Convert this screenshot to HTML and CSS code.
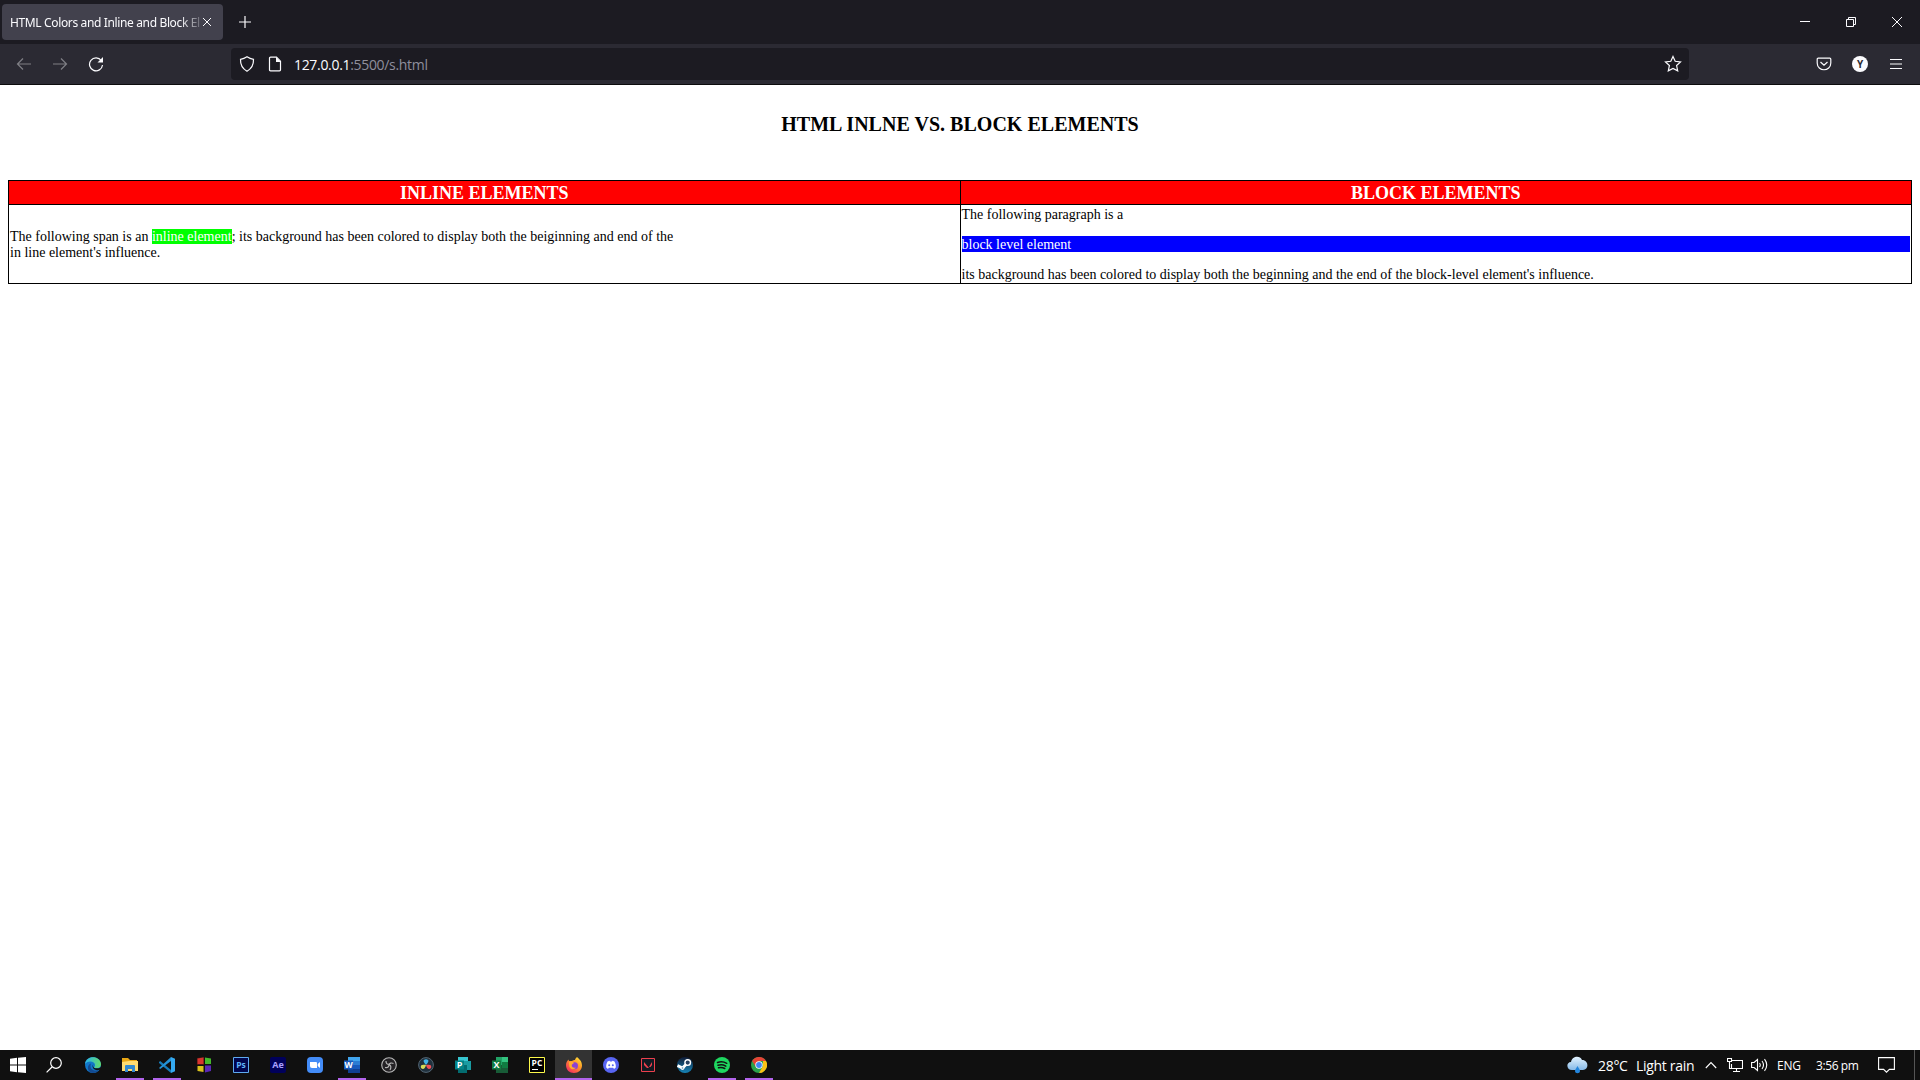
FILE: index.html
```html
<!DOCTYPE html>
<html lang="en">
<head>
<meta charset="utf-8">
<title>HTML Colors and Inline and Block Elements</title>
<link rel="stylesheet" href="styles.css">
</head>
<body>
<header class="tabs">
  <div class="tab"><span class="tab-title">HTML Colors and Inline and Block El</span>
    <svg class="tab-close" width="10" height="10" viewBox="0 0 10 10"><path d="M1 1l8 8M9 1L1 9"/></svg></div>
  <svg class="new-tab" width="14" height="14" viewBox="0 0 14 14"><path d="M7 1v12M1 7h12"/></svg>
  <div class="window-buttons">
    <svg width="12" height="12" viewBox="0 0 12 12"><path d="M1 5.500h10"/></svg>
    <svg width="12" height="12" viewBox="0 0 12 12"><path d="M1.500 3.500h7v7h-7zM3.500 3V1.500h7v7H9"/></svg>
    <svg width="12" height="12" viewBox="0 0 12 12"><path d="M1 1l10 10M11 1L1 11"/></svg>
  </div>
</header>
<nav class="toolbar">
  <div class="nav-buttons">
    <svg class="dim" width="16" height="16" viewBox="0 0 16 16"><path d="M15 8H1.500M7 2.500L1.500 8 7 13.500"/></svg>
    <svg class="dim" width="16" height="16" viewBox="0 0 16 16"><path d="M1 8h13.500M9 2.500L14.500 8 9 13.500"/></svg>
    <svg width="16" height="16" viewBox="0 0 16 16"><path d="M13.300 4.500A6.500 6.500 0 1 0 14.500 9" /><path class="solid" d="M15 1v5.500H9.500z"/></svg>
  </div>
  <div class="address">
    <svg width="16" height="16" viewBox="0 0 16 16"><path d="M8 .8C6 2.200 4 3 1.500 3.300 1.300 8.500 3 12.500 8 15.200c5-2.700 6.700-6.700 6.500-11.900C12 3 10 2.200 8 .8z"/></svg>
    <svg width="16" height="16" viewBox="0 0 16 16"><path d="M3.500 1.200h6l4 4v8.600q0 1-1 1h-9q-1 0-1-1V2.200q0-1 1-1z"/><path class="solid" d="M9 1l5 5H9z"/></svg>
    <span class="url"><b>127.0.0.1</b>:5500/s.html</span>
    <svg class="star" width="18" height="18" viewBox="0 0 18 18"><path d="M9 1.500l2.200 4.800 5.300.6-3.900 3.600 1.100 5.400L9 13.400l-4.700 2.500 1.100-5.400L1.500 6.900l5.300-.6z"/></svg>
  </div>
  <div class="tools">
    <svg width="16" height="16" viewBox="0 0 16 16"><path d="M2.200 2.200h11.600q1 0 1 1V7c0 9-13.600 9-13.600 0V3.200q0-1 1-1zM4.500 6L8 9.300 11.500 6"/></svg>
    <span class="avatar">Y</span>
    <svg width="16" height="16" viewBox="0 0 16 16"><path d="M2 3.500h12M2 8h12M2 12.500h12"/></svg>
  </div>
</nav>
<main class="page">
  <h2>HTML INLNE VS. BLOCK ELEMENTS</h2>
  <table>
    <tr><th>INLINE ELEMENTS</th><th>BLOCK ELEMENTS</th></tr>
    <tr>
      <td>The following span is an <span class="inline-demo">inline element</span>; its background has been colored to display both the beiginning and end of the<br>in line element's influence.</td>
      <td>The following paragraph is a<p class="block-demo">block level element</p>its background has been colored to display both the beginning and the end of the block-level element's influence.</td>
    </tr>
  </table>
</main>
<footer class="taskbar">
  <div class="slot start"><svg viewBox="0 0 16 16"><path fill="#fff" d="M0 1.700L7 .8v6.700H0zM8 .7L16 0v7.500H8zM0 8.500h7v6.700l-7-.9zM8 8.500h8V16l-8-.8z"/></svg></div>
  <div class="slot search"><svg viewBox="0 0 16 16"><path fill="none" stroke="#fff" stroke-width="1.200" d="M6 10L.6 15.400"/><circle cx="10" cy="6" r="5.300" fill="none" stroke="#fff" stroke-width="1.200"/></svg></div>
  <div class="slot"><svg viewBox="0 0 16 16"><defs><linearGradient id="edge"><stop stop-color="#2bb5ed"/><stop offset="1" stop-color="#62db69"/></linearGradient></defs><circle cx="8" cy="8" r="8" fill="#1277c9"/><path fill="url(#edge)" d="M0 7C1-2 15-2 16 7c0 4-4 5-6.500 4-1-1 .5-1 .5-3C10 4 3 3 0 7z"/><path fill="#134a91" d="M6 6.500c-2 5 2 8.500 8 6.500-3 4-10 4-11-1-.5-3 1-5 3-5.500z"/><path fill="#111" d="M8.500 7c-1.500 2 0 5.500 6 4l1.500-1v2l-2 1c-5 1-8-3-5.500-6z"/></svg></div>
  <div class="slot open"><svg viewBox="0 0 16 16"><path fill="#e9a714" d="M0 1h6l2 2h7v3H0z"/><path fill="#ffdc71" d="M0 5l7-1h9v10H0z"/><path fill="#3289d0" d="M3 9q0-1 1-1h8q1 0 1 1v6h-3v-3H6v3H3z"/></svg></div>
  <div class="slot open"><svg viewBox="0 0 16 16"><path fill="#167bb9" d="M0 5l1.200-1L12 13v3L0 6z"/><path fill="#2492d6" d="M0 11L12 0v4L1.200 12z"/><path fill="#35aaf1" d="M12 0l4 1.800v12.400L12 16z"/></svg></div>
  <div class="slot"><svg viewBox="0 0 16 16"><path fill="#4a1512" d="M1 1l7-1v8H1z"/><path fill="#d8352f" d="M1.500 1.500L7.500.5V7h-6z"/><path fill="#45b82b" d="M9 .5l6 1V7H9z"/><path fill="#d9c21c" d="M1.500 9h6v6l-6-1z"/><path fill="#5b28b8" d="M9 8.500h6V14l-6 1.500z"/></svg></div>
  <div class="slot"><svg viewBox="0 0 16 16"><path fill="#00064d" stroke="#5eaaf0" d="M.5.5h15v15H.5z"/><text x="8" y="11" font-size="8.500" fill="#5eb5fa">Ps</text></svg></div>
  <div class="slot"><svg viewBox="0 0 16 16"><rect width="16" height="16" rx="2" fill="#00005b"/><text x="8" y="11" font-size="9" fill="#aaa0ff">Ae</text></svg></div>
  <div class="slot"><svg viewBox="0 0 16 16"><rect width="16" height="16" rx="4" fill="#438cf7"/><path fill="#fff" d="M3 5h6q1 0 1 1v5H5q-2 0-2-2zM10.700 7L13 5v6l-2.300-2z"/></svg></div>
  <div class="slot open"><svg viewBox="0 0 16 16"><path fill="#41a5ee" d="M4 0h12v5H4z"/><path fill="#2b7cd3" d="M4 4h12v4H4z"/><path fill="#185abd" d="M4 8h12v4H4z"/><path fill="#103f91" d="M4 12h12v4H4z"/><path fill="#185abd" d="M0 3.500h9v9H0z"/><text x="4.500" y="11" font-size="8.500" fill="#fff">W</text></svg></div>
  <div class="slot"><svg viewBox="0 0 16 16"><circle cx="8" cy="8" r="7.300" fill="#252326" stroke="#b9b9b9" stroke-width="1.100"/><path fill="none" stroke="#b5b5b5" stroke-width="1.200" d="M5 4c0 3 1 3.500 3 3.500M12.500 6.500c-2-1-4-.5-4.500 1.500M4 10.500c3 .5 4-1 4-3 2 1 2.500 3 1 5.500"/></svg></div>
  <div class="slot"><svg viewBox="0 0 16 16"><circle cx="8" cy="8" r="7.400" fill="#20313e" stroke="#536573"/><path fill="#43b5e8" d="M8 8Q4.500 4 6 3c1-1 3-1 4 0q1.500 1-2 5z"/><path fill="#d5db57" d="M8 8c-1 4-3 5-5 3-1-3 1-4 5-3z"/><path fill="#f15156" d="M8 8c4-1 6 0 5 3-2 2-4 1-5-3z"/></svg></div>
  <div class="slot"><svg viewBox="0 0 16 16"><path fill="#37c6d0" d="M3 0h10v8H3z"/><path fill="#1a9ba1" d="M6 4h10v9H6z"/><path fill="#036c70" d="M3 8h9v8H3z"/><path fill="#038387" d="M0 3.500h9v9H0z"/><text x="4.700" y="11" font-size="9" fill="#fff">P</text></svg></div>
  <div class="slot"><svg viewBox="0 0 16 16"><path fill="#21a366" d="M4 0h6v8H4z"/><path fill="#33c481" d="M10 0h6v5h-6z"/><path fill="#107c41" d="M10 5h6v6h-6z"/><path fill="#185c37" d="M4 8h6v3h6v5H4z"/><path fill="#107c41" d="M0 3.500h9v9H0z"/><text x="4.500" y="11" font-size="9" fill="#fff">X</text></svg></div>
  <div class="slot"><svg viewBox="0 0 16 16"><path fill="#000" stroke="#fcf84a" d="M.5.5h15v15H.5z"/><text x="8" y="9" font-size="8.500" fill="#fff">PC</text><path stroke="#fff" d="M3 12.500h6"/></svg></div>
  <div class="slot active"><svg viewBox="0 0 16 16"><defs><linearGradient id="fire" x1="1" y1="0" x2=".2" y2="1"><stop stop-color="#fff33c"/><stop offset=".45" stop-color="#ff9627"/><stop offset="1" stop-color="#f52864"/></linearGradient></defs><path fill="url(#fire)" d="M11 0c2 2 5 4 5 8.500C16 13 12.500 16 8 16S0 13 0 8c0-2 1-4 2.500-5.500L3 4h3c1-1 2-1 3-1 0-1 1-2 2-3z"/><circle cx="8.500" cy="8.700" r="3.500" fill="#8b42d4"/><path fill="#ffad2c" d="M3 5c3-1 4 0 5 1L6 7.500c-1 2 1 4 4 3-2 3-7 2-7-3z"/></svg></div>
  <div class="slot"><svg viewBox="0 0 16 16"><circle cx="8" cy="8" r="8" fill="#5865f2"/><path fill="#fff" d="M4.500 4.500l2-.7.5.8h2l.5-.8 2 .7c1 2 1.500 3.500 1.300 6L11 12l-.8-1.200H5.800L5 12l-1.800-1.500c-.2-2.500.3-4 1.300-6z"/><circle cx="6.200" cy="8.300" r="1" fill="#5865f2"/><circle cx="9.800" cy="8.300" r="1" fill="#5865f2"/></svg></div>
  <div class="slot"><svg class="valorant" viewBox="0 0 14 14"><path fill="#111a22" stroke="#ed404d" d="M.5.5h13v13H.5z"/><path fill="#ed404d" d="M3 4l5 6H6L3 7zM11 4v3L9.500 9H8z"/></svg></div>
  <div class="slot"><svg viewBox="0 0 16 16"><defs><linearGradient id="steam" x2="0" y2="1"><stop stop-color="#101b35"/><stop offset="1" stop-color="#1685b8"/></linearGradient></defs><circle cx="8" cy="8" r="8" fill="url(#steam)"/><path fill="none" stroke="#fff" stroke-width="3" d="M.5 8.500l5 2.500 5-5"/><circle cx="10.700" cy="5.600" r="2.800" fill="#25405f" stroke="#fff" stroke-width="1.400"/><circle cx="5.500" cy="11" r="1.500" fill="#8eb2ca" stroke="#fff"/></svg></div>
  <div class="slot open"><svg viewBox="0 0 16 16"><circle cx="8" cy="8" r="8" fill="#1ed760"/><path fill="none" stroke="#111" stroke-linecap="round" stroke-width="1.500" d="M3.500 5.500c3-1 6.500-.7 9.200.8M4 8.300c2.500-.8 5.500-.5 7.800.8M4.500 10.800c2-.6 4.300-.4 6.300.7"/></svg></div>
  <div class="slot open"><svg viewBox="0 0 16 16"><circle cx="8" cy="8" r="8" fill="#2ba24c"/><path fill="#e64235" d="M1.100 4A8 8 0 0 1 15 4H8L5 10z"/><path fill="#fbc116" d="M15 4a8 8 0 0 1-7 12l4-7V4z"/><circle cx="8" cy="8" r="3.700" fill="#fff"/><circle cx="8" cy="8" r="2.900" fill="#4285f4"/></svg></div>
  <div class="tray">
    <svg class="weather" width="21" height="18" viewBox="0 0 21 18"><defs><linearGradient id="cloud" x2="0" y2="1"><stop stop-color="#e3f3ff"/><stop offset="1" stop-color="#86b9e7"/></linearGradient></defs><path fill="url(#cloud)" d="M5 14C-1 14-1 6 4 6 5 0 13-1 15 4c7 0 7 10 1 10z"/><path fill="#2385dc" d="M10.500 10c-1.500 2.500-2.500 3.500-2.500 5 0 3 5 3 5 0 0-1.500-1-2.500-2.500-5z"/></svg>
    <span class="temp">28°C</span><span class="condition">Light rain</span>
    <svg class="chevron" width="12" height="8" viewBox="0 0 12 8"><path d="M.8 7L6 1.500 11.200 7"/></svg>
    <svg class="network" width="16" height="14" viewBox="0 0 16 14"><path d="M5 2.500h10.500v8H4.500V6M9.500 10.500v3M6 13.500h7M.5.5h4v3h-4zM2.500 3.500v7h2"/></svg>
    <svg class="volume" width="17" height="14" viewBox="0 0 17 14"><path d="M.6 4.500h2.500L6.500 1.500v11L3.100 9.500H.6zM8.500 5q1.500 2 0 4M11 3q3 4 0 8M13.500 1.200q4.500 5.800 0 11.600"/></svg>
    <span class="lang">ENG</span><span class="time">3:56 pm</span>
    <svg class="notice" width="17" height="16" viewBox="0 0 17 16"><path d="M.6.6h15.800v11.800h-5l-2.900 2.800-2.900-2.800h-5z"/></svg>
  </div>
</footer>
</body>
</html>
```
FILE: styles.css
```css
* { box-sizing: border-box; }
body { margin: 0; height: 1080px; display: flex; flex-direction: column; overflow: hidden; background: #fff; font-family: "Open Sans", "Noto Sans", sans-serif; }
svg { display: block; flex: none; }
.tabs { height: 44px; flex: none; display: flex; align-items: center; background: #1c1b22; padding-left: 2px; }
.tabs svg, .toolbar svg { fill: none; stroke: #fbfbfe; stroke-width: 1.2; }
.tab { width: 221px; height: 36px; border-radius: 4px; background: #42414d; display: flex; align-items: center; padding: 0 11px 0 8px; color: #fbfbfe; font: 12px "Noto Sans", sans-serif; }
.tab-title { width: 191px; flex: none; white-space: nowrap; letter-spacing: -.36px; padding-top: 1px; mask-image: linear-gradient(90deg, #000 170px, transparent 196px); }
.tab .tab-close { margin-left: 1px; stroke-width: 1; }
.new-tab { margin-left: 15px; }
.window-buttons { margin-left: auto; display: flex; gap: 34px; padding-right: 17px; }
.window-buttons svg { stroke-width: 1; }
.toolbar { height: 41px; flex: none; display: flex; align-items: center; background: #2b2a33; border-bottom: 1px solid #0c0c0d; }
.nav-buttons { width: 231px; display: flex; gap: 20px; padding-left: 16px; }
.toolbar .dim { opacity: .4; }
.toolbar .solid { fill: #fbfbfe; stroke: none; }
.address { width: 1458px; height: 32px; border-radius: 4px; background: #1c1b22; display: flex; align-items: center; padding: 0 7px 0 8px; gap: 12px; }
.url { font-size: 14px; color: #8f8f9d; line-height: 20px; padding-top: 2px; letter-spacing: -.32px; margin-left: -1px; }
.url b { color: #fbfbfe; font-weight: 400; }
.star { margin-left: auto; }
.tools { margin-left: auto; display: flex; align-items: center; gap: 20px; padding-right: 16px; }
.avatar { width: 16px; height: 16px; border-radius: 50%; background: #fbfbfe; color: #2b2a33; font: bold 10px/16px "Open Sans", sans-serif; text-align: center; }
.page { flex: 1; padding: 0 8px; font-family: "Liberation Serif", serif; font-size: 14px; line-height: 16px; color: #000; }
.page h2 { margin: 28px 0 44px; font-size: 20px; line-height: 23px; text-align: center; letter-spacing: .02px; }
.page table { width: 1904px; table-layout: fixed; border-collapse: collapse; }
.page th, .page td { border: 1px solid #000; padding: 2px 1px 0; }
.page th { background: red; color: #fff; font-size: 18px; line-height: 21px; height: 24px; }
.page td { height: 79px; text-align: left; vertical-align: middle; }
.inline-demo { background: lime; color: #fff; }
.block-demo { margin: 13px 0 15px; padding-top: 2px; line-height: 14px; background: blue; color: #fff; }
.taskbar { height: 30px; flex: none; display: flex; background: #101010; color: #fff; }
.slot { width: 37px; display: flex; justify-content: center; align-items: center; }
.slot svg { width: 16px; height: 16px; }
.slot text { font-family: "Open Sans", sans-serif; font-weight: 700; text-anchor: middle; }
.slot .valorant { width: 14px; height: 14px; }
.start { width: 36px; }
.search { width: 38px; padding-right: 2px; }
.open { background: linear-gradient(#b264ec, #b264ec) center bottom / 28px 2px no-repeat; }
.active { background: #333; border-bottom: 2px solid #b264ec; }
.active svg { margin-top: 2px; }
.tray { margin-left: auto; width: 353px; display: flex; align-items: center; font-size: 12px; white-space: nowrap; }
.tray svg { fill: none; stroke: #fff; stroke-width: 1.1; }
.tray .weather { stroke: none; margin-right: 10px; }
.temp, .condition { font-size: 14px; letter-spacing: -.3px; padding-top: 1px; }
.temp { width: 38px; }
.condition { width: 59px; }
.tray .chevron { margin-left: 10px; }
.tray .network { margin-left: 10px; }
.tray .volume { margin-left: 8px; }
.lang { margin-left: 9px; width: 23px; letter-spacing: -.2px; }
.time { margin-left: 16px; width: 43px; letter-spacing: -.4px; }
.tray .notice { margin-left: 19px; }
.tray::after { content: ""; height: 30px; width: 5px; border-left: 1px solid #555; margin-left: auto; }
```
